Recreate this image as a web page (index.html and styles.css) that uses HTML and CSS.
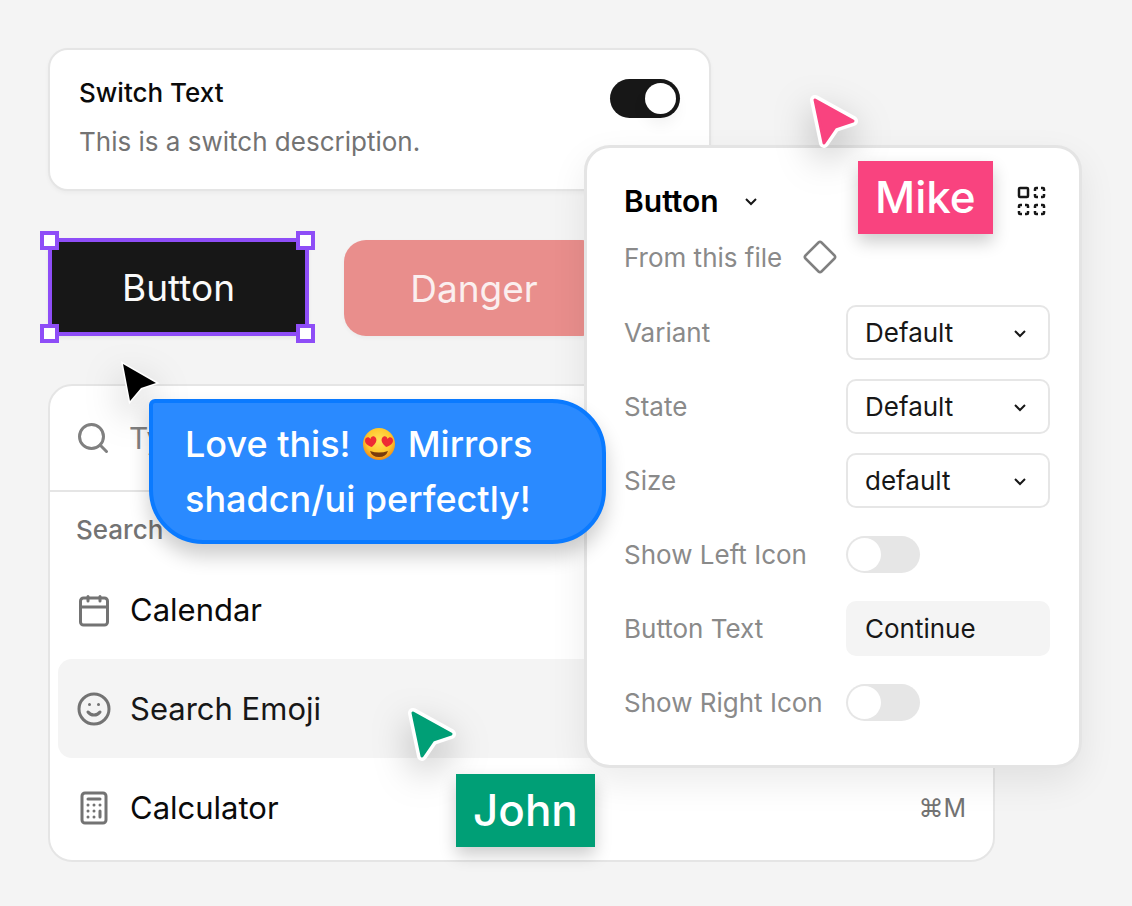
FILE: index.html
```html
<!DOCTYPE html>
<html lang="en">
<head>
  <meta charset="utf-8">
  <title>Components</title>
  <link rel="stylesheet" href="styles.css">
</head>
<body>
  <main class="board">

    <section class="switch-card">
      <div class="switch-text">
        <label for="switch">Switch Text</label>
        <p>This is a switch description.</p>
      </div>
      <input class="switch" id="switch" type="checkbox" checked>
    </section>

    <div class="buttons">
      <div class="selection">
        <button class="btn btn-default" type="button">Button</button>
        <span class="handle top left"></span>
        <span class="handle top right"></span>
        <span class="handle bottom left"></span>
        <span class="handle bottom right"></span>
      </div>
      <button class="btn btn-danger" type="button">Danger</button>
    </div>

    <section class="command">
      <div class="command-search">
        <svg class="icon" viewBox="0 0 24 24"><circle cx="11" cy="11" r="8"/><path d="m21 21-4.3-4.3"/></svg>
        <input type="text" aria-label="Search" placeholder="Type a command or search...">
      </div>
      <h2>Search</h2>
      <ul>
        <li>
          <svg class="icon" viewBox="0 0 24 24"><rect x="3" y="4" width="18" height="18" rx="2"/><path d="M8 3v3M16 3v3M3 10h18"/></svg>
          <span>Calendar</span>
        </li>
        <li class="active">
          <svg class="icon" viewBox="0 0 24 24"><circle cx="12" cy="12" r="10"/><path d="M8 14s1.5 2 4 2 4-2 4-2M9 9h.01M15 9h.01"/></svg>
          <span>Search Emoji</span>
        </li>
        <li>
          <svg class="icon" viewBox="0 0 24 24"><rect x="4" y="2" width="16" height="20" rx="2"/><path d="M8 6h8M16 14v4M16 10h.01M12 10h.01M8 10h.01M12 14h.01M8 14h.01M12 18h.01M8 18h.01"/></svg>
          <span>Calculator</span>
          <kbd>⌘M</kbd>
        </li>
      </ul>
    </section>

    <form class="panel">
      <header class="panel-head">
        <h1>Button</h1>
        <svg class="chevron" viewBox="0 0 16 16"><path d="m3 6 5 5 5-5"/></svg>
        <svg class="variants" viewBox="0 0 30 30">
          <rect x="2" y="2" width="9" height="9" rx="1"/>
          <path d="M18 5V3q0-1 1-1h2M24 2h2q1 0 1 1v2M27 8v2q0 1-1 1h-2M21 11h-2q-1 0-1-1V8"/>
          <path d="M2 22v-2q0-1 1-1h2M8 19h2q1 0 1 1v2M11 25v2q0 1-1 1H8M5 28H3q-1 0-1-1v-2"/>
          <path d="M18 22v-2q0-1 1-1h2M24 19h2q1 0 1 1v2M27 25v2q0 1-1 1h-2M21 28h-2q-1 0-1-1v-2"/>
        </svg>
      </header>
      <p class="panel-source">From this file
        <svg class="diamond" viewBox="0 0 36 36"><path d="M16.500 3.500 3.500 16.500q-1.500 1.500 0 3L16.500 32.500q1.500 1.500 3 0L32.500 19.500q1.500-1.500 0-3L19.500 3.500q-1.500-1.500-3 0Z"/></svg>
      </p>

      <div class="props">
        <label for="variant">Variant</label>
        <div class="select">
          <select id="variant"><option>Default</option></select>
          <svg class="chevron" viewBox="0 0 16 16"><path d="m3 6 5 5 5-5"/></svg>
        </div>
        <label for="state">State</label>
        <div class="select">
          <select id="state"><option>Default</option></select>
          <svg class="chevron" viewBox="0 0 16 16"><path d="m3 6 5 5 5-5"/></svg>
        </div>
        <label for="size">Size</label>
        <div class="select">
          <select id="size"><option>default</option></select>
          <svg class="chevron" viewBox="0 0 16 16"><path d="m3 6 5 5 5-5"/></svg>
        </div>
        <label for="left-icon">Show Left Icon</label>
        <input class="toggle" id="left-icon" type="checkbox">
        <label for="button-text">Button Text</label>
        <input class="field" id="button-text" type="text" value="Continue">
        <label for="right-icon">Show Right Icon</label>
        <input class="toggle" id="right-icon" type="checkbox">
      </div>
    </form>

    <svg class="cursor cursor-black" viewBox="0 0 46 50">
      <path class="outline" d="M5 4 38 23 23 28 12 41Z"/>
      <path class="fill" d="M5 4 38 23 23 28 12 41Z"/>
    </svg>
    <div class="bubble">Love this!
      <svg class="emoji" viewBox="0 0 34 34" role="img" aria-label="Heart eyes">
        <defs>
          <radialGradient id="face" cx="50%" cy="40%" r="60%">
            <stop offset="0" stop-color="#ffe45a"/>
            <stop offset=".65" stop-color="#ffc72d"/>
            <stop offset="1" stop-color="#ef8a18"/>
          </radialGradient>
          <path id="heart" d="M0 5C-4 3-6.500 0-5.500-3-4.500-6-1-6 0-3 1-6 4.500-6 5.500-3 6.500 0 4 3 0 5Z"/>
        </defs>
        <circle cx="17" cy="17" r="16" fill="url(#face)"/>
        <use href="#heart" fill="#ee2b34" transform="translate(9 15) rotate(-10)"/>
        <use href="#heart" fill="#ee2b34" transform="translate(25 15) rotate(10)"/>
        <path d="M8 24q9 3 18 0-2 6-9 6t-9-6Z" fill="#7a3c0c"/>
      </svg>
      Mirrors<br>shadcn/ui perfectly!</div>

    <svg class="cursor cursor-mike" viewBox="0 0 56 64">
      <path class="outline" d="M9 10 47 31 29 37 18 53Z"/>
      <path class="fill" d="M9 10 47 31 29 37 18 53Z"/>
    </svg>
    <div class="tag tag-mike">Mike</div>

    <svg class="cursor cursor-john" viewBox="0 0 56 64">
      <path class="outline" d="M9 10 47 31 29 37 18 53Z"/>
      <path class="fill" d="M9 10 47 31 29 37 18 53Z"/>
    </svg>
    <div class="tag tag-john">John</div>

  </main>
</body>
</html>
```
FILE: styles.css
```css
* {
  box-sizing: border-box;
}

body {
  margin: 0;
  background: #f4f4f4;
  color: #0a0a0a;
  font-family: Inter, "Liberation Sans", sans-serif;
}

h1, h2, p, ul {
  margin: 0;
  padding: 0;
}

button, input, select {
  margin: 0;
  font: inherit;
}

.board {
  position: relative;
  min-height: 100vh;
  padding: 48px 48px 44px;
}

/* switch card */
.switch-card {
  display: flex;
  justify-content: space-between;
  align-items: flex-start;
  max-width: 663px;
  padding: 18px 29px 23px;
  background: #fff;
  border: 2px solid #e5e5e5;
  border-radius: 20px;
  box-shadow: 0 2px 4px rgba(0, 0, 0, 0.04);
  font-size: 26px;
  line-height: 49px;
}

.switch-text label {
  font-weight: 500;
}

.switch-text p {
  color: #737373;
}

.switch {
  appearance: none;
  width: 70px;
  height: 39px;
  margin-top: 11px;
  padding: 4px;
  border-radius: 20px;
  background: #171717;
}

.switch::before {
  content: "";
  display: block;
  width: 31px;
  height: 31px;
  margin-left: auto;
  border-radius: 50%;
  background: #fff;
  box-shadow: 0 10px 16px rgba(0, 0, 0, 0.06);
}

/* buttons */
.buttons {
  display: flex;
  align-items: flex-end;
  gap: 35px;
  margin: 47px 0 48px;
}

.btn {
  border: 0;
  font-size: 37px;
  font-weight: 400;
}

.selection {
  position: relative;
  width: 261px;
  border: 4px solid #8e4df7;
  box-shadow: 0 2px 4px rgba(0, 0, 0, 0.06);
}

.btn-default {
  display: block;
  width: 100%;
  height: 90px;
  background: #171717;
  color: #fafafa;
}

.btn-danger {
  width: 260px;
  height: 96px;
  border-radius: 22px;
  background: #e98e8c;
  color: #fbefef;
  box-shadow: 0 2px 4px rgba(0, 0, 0, 0.04);
}

.handle {
  position: absolute;
  width: 19px;
  height: 19px;
  border: 4px solid #8e4df7;
  background: #fff;
}

.handle.top { top: -11px; }
.handle.bottom { bottom: -11px; }
.handle.left { left: -12px; }
.handle.right { right: -10px; }

/* command menu */
.command {
  max-width: 947px;
  padding-bottom: 3px;
  background: #fff;
  border: 2px solid #e5e5e5;
  border-radius: 24px;
}

.icon {
  flex: none;
  width: 36px;
  height: 36px;
  fill: none;
  stroke: #737373;
  stroke-width: 2;
  stroke-linecap: round;
  stroke-linejoin: round;
}

.command-search {
  display: flex;
  align-items: center;
  gap: 18px;
  height: 106px;
  padding: 0 25px;
  border-bottom: 2px solid #e5e5e5;
}

.command-search .icon {
  stroke: #808080;
}

.command-search input {
  flex: 1;
  padding: 0;
  border: 0;
  outline: 0;
  background: none;
  font-size: 30px;
}

.command-search input::placeholder {
  color: #808080;
}

.command h2 {
  height: 68px;
  padding: 0 26px;
  color: #737373;
  font-size: 26px;
  font-weight: 500;
  line-height: 75px;
}

.command ul {
  padding: 0 8px;
  list-style: none;
}

.command li {
  display: flex;
  align-items: center;
  gap: 18px;
  height: 99px;
  padding: 0 19px 0 18px;
  border-radius: 14px;
  font-size: 31px;
}

.command li.active {
  background: #f4f4f4;
  color: #171717;
}

.command kbd {
  margin-left: auto;
  color: #737373;
  font-family: inherit;
  font-size: 25px;
}

/* properties panel */
.panel {
  position: absolute;
  top: 145px;
  left: 584px;
  width: 498px;
  padding: 33px 29px 35px 37px;
  background: #fff;
  border: 3px solid #e4e4e4;
  border-radius: 26px;
  box-shadow: 0 14px 36px rgba(0, 0, 0, 0.08);
  color: #171717;
  font-size: 26px;
}

.panel-head {
  display: flex;
  align-items: center;
  height: 40px;
}

.panel h1 {
  color: #000;
  font-size: 30px;
  font-weight: 600;
}

.chevron {
  width: 16px;
  height: 16px;
  fill: none;
  stroke: #171717;
  stroke-width: 2;
}

.panel-head .chevron {
  margin-left: 24px;
}

.variants {
  width: 30px;
  height: 30px;
  margin-left: auto;
  margin-right: 3px;
  fill: none;
  stroke: #171717;
  stroke-width: 2.5;
}

.panel-source {
  display: flex;
  align-items: center;
  gap: 20px;
  height: 40px;
  margin: 16px 0 28px;
  color: #8a8a8a;
}

.diamond {
  width: 36px;
  height: 36px;
  fill: none;
  stroke: #808080;
  stroke-width: 2.5;
}

.props {
  display: grid;
  grid-template-columns: 1fr 204px;
  grid-auto-rows: 55px;
  gap: 19px 0;
  align-items: center;
}

.props label {
  color: #8a8a8a;
}

.select {
  position: relative;
}

.select select,
.field {
  display: block;
  width: 100%;
  height: 55px;
  padding: 0 17px;
  appearance: none;
  border: 2px solid #e6e6e6;
  border-radius: 10px;
  background: #fff;
  color: #171717;
}

.select .chevron {
  position: absolute;
  top: 20px;
  right: 22px;
  pointer-events: none;
}

.field {
  border-color: #f4f4f4;
  background: #f4f4f4;
}

.toggle {
  appearance: none;
  width: 74px;
  height: 37px;
  padding: 2px;
  border-radius: 19px;
  background: #e6e6e6;
}

.toggle::before {
  content: "";
  display: block;
  width: 33px;
  height: 33px;
  border-radius: 50%;
  background: #fff;
}

/* cursors and comments */
.cursor {
  position: absolute;
  width: 56px;
  height: 64px;
  overflow: visible;
  stroke-linejoin: round;
  filter: drop-shadow(0 14px 18px rgba(0, 0, 0, 0.25));
}

.cursor .outline {
  fill: #fff;
  stroke: #fff;
  stroke-width: 10;
}

.cursor .fill {
  stroke-width: 3;
}

.cursor-black {
  top: 360px;
  left: 118px;
  width: 46px;
  height: 50px;
  stroke-linejoin: miter;
}

.cursor-black .outline {
  stroke-width: 3;
}

.cursor-black .fill {
  stroke: none;
}

.cursor-mike {
  top: 90px;
  left: 806px;
  fill: #f9437f;
  stroke: #f9437f;
}

.cursor-john {
  top: 703px;
  left: 404px;
  fill: #009f76;
  stroke: #009f76;
}

.tag {
  position: absolute;
  padding: 0 17px;
  color: #fff;
  font-size: 44px;
  font-weight: 500;
  line-height: 73px;
  box-shadow: 0 8px 16px rgba(0, 0, 0, 0.2);
}

.tag-mike {
  top: 161px;
  left: 858px;
  background: #f9437f;
}

.tag-john {
  top: 774px;
  left: 456px;
  background: #009f76;
}

.bubble {
  position: absolute;
  top: 399px;
  left: 149px;
  width: 457px;
  padding: 14px 32px 13px;
  background: #2a8aff;
  border: 4px solid #0a7aff;
  border-radius: 6px 54px 54px 54px;
  color: #fff;
  font-size: 36px;
  font-weight: 500;
  line-height: 55px;
  box-shadow: 0 12px 20px rgba(0, 0, 0, 0.2);
}

.emoji {
  width: 34px;
  height: 34px;
  margin: 0 2px;
  vertical-align: -4px;
}
```
